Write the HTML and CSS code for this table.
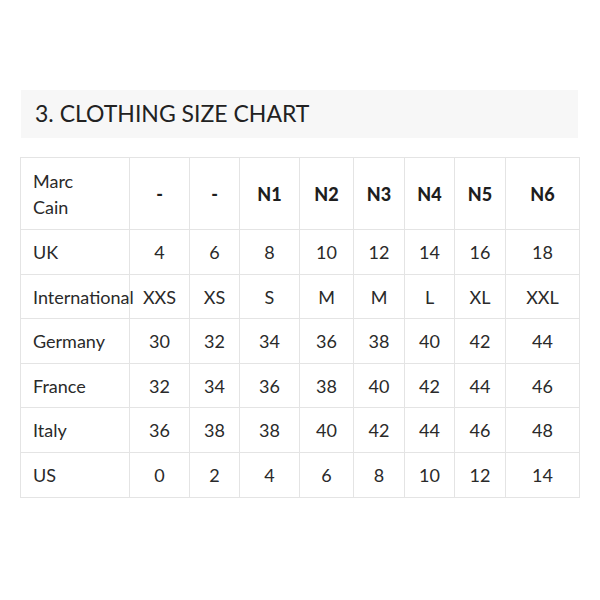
FILE: index.html
```html
<!DOCTYPE html>
<html>
<head>
<meta charset="utf-8">
<link rel="stylesheet" href="styles.css">
</head>
<body>
<div class="page">
  <h2 class="title">3. CLOTHING SIZE CHART</h2>
  <table class="chart">
    <colgroup>
      <col class="c0"><col class="c1"><col class="c2"><col class="c3"><col class="c4"><col class="c5"><col class="c6"><col class="c7"><col class="c8">
    </colgroup>
    <tr class="head"><td class="label">Marc<br>Cain</td><th>-</th><th>-</th><th>N1</th><th>N2</th><th>N3</th><th>N4</th><th>N5</th><th>N6</th></tr>
    <tr class="r45"><td class="label">UK</td><td>4</td><td>6</td><td>8</td><td>10</td><td>12</td><td>14</td><td>16</td><td>18</td></tr>
    <tr class="r44"><td class="label">International</td><td>XXS</td><td>XS</td><td>S</td><td>M</td><td>M</td><td>L</td><td>XL</td><td>XXL</td></tr>
    <tr class="r45"><td class="label">Germany</td><td>30</td><td>32</td><td>34</td><td>36</td><td>38</td><td>40</td><td>42</td><td>44</td></tr>
    <tr class="r44"><td class="label">France</td><td>32</td><td>34</td><td>36</td><td>38</td><td>40</td><td>42</td><td>44</td><td>46</td></tr>
    <tr class="r45"><td class="label">Italy</td><td>36</td><td>38</td><td>38</td><td>40</td><td>42</td><td>44</td><td>46</td><td>48</td></tr>
    <tr class="r45"><td class="label">US</td><td>0</td><td>2</td><td>4</td><td>6</td><td>8</td><td>10</td><td>12</td><td>14</td></tr>
  </table>
</div>
</body>
</html>
```
FILE: styles.css
```css
html, body {
  margin: 0;
  padding: 0;
  background: #ffffff;
}
.page {
  padding: 90px 0 0 20px;
  font-family: "Lato", "Open Sans", sans-serif;
  color: #2a2a2a;
}
.title {
  margin: 0 0 0 1px;
  width: 543px;
  height: 48px;
  padding-left: 14px;
  background: #f7f7f7;
  font-weight: 400;
  font-size: 23px;
  line-height: 47px;
  letter-spacing: 0;
  color: #222222;
}
.chart {
  margin-top: 19px;
  border-collapse: collapse;
  table-layout: fixed;
  width: 559px;
  border: 1px solid #e4e4e4;
}
.c0 { width: 109px; }
.c1 { width: 60px; }
.c2 { width: 50px; }
.c3 { width: 60px; }
.c4 { width: 54px; }
.c5 { width: 51px; }
.c6 { width: 50px; }
.c7 { width: 51px; }
.c8 { width: 74px; }
.chart td, .chart th {
  border: 1px solid #e4e4e4;
  padding: 0;
  text-align: center;
  vertical-align: middle;
  font-size: 18px;
  font-weight: 400;
  white-space: nowrap;
}
.chart th {
  font-weight: 900;
  font-size: 18px;
  color: #1e1e1e;
}
.chart td.label {
  text-align: left;
  padding-left: 12px;
}
.head { height: 72px; }
.head td.label { line-height: 26px; }
.r45 { height: 45px; }
.r44 { height: 44px; }
```
